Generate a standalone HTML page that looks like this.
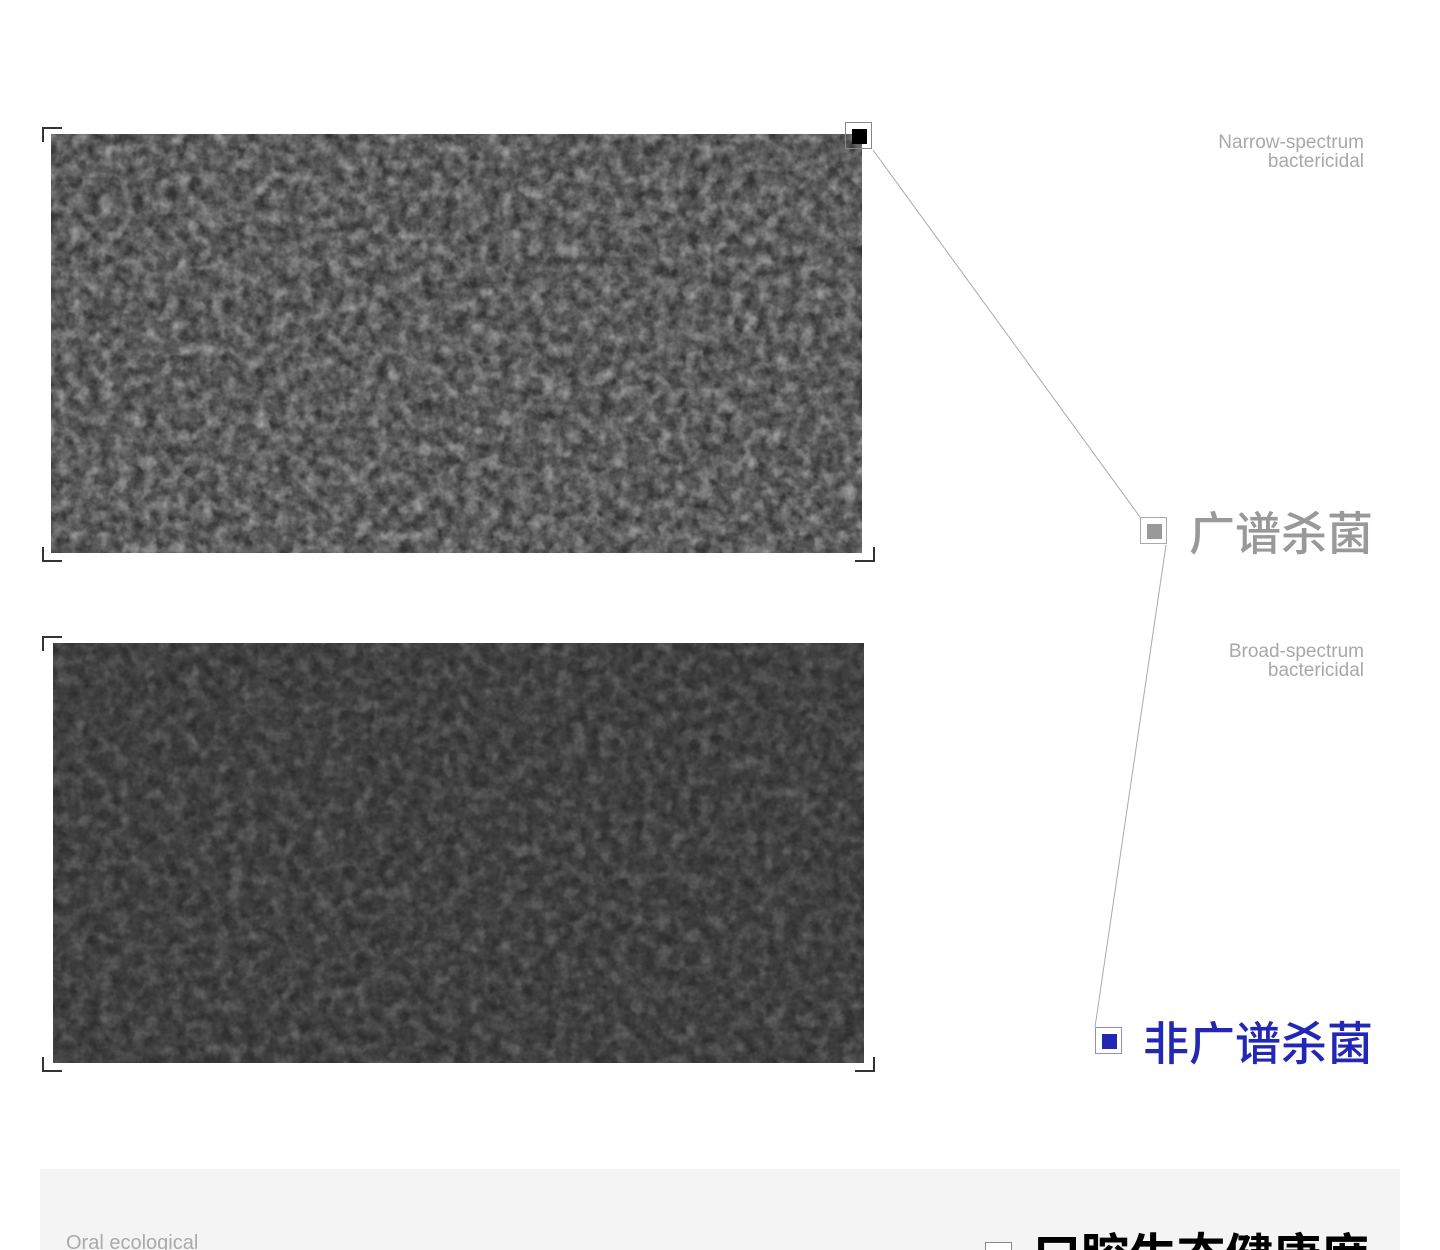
<!DOCTYPE html>
<html><head><meta charset="utf-8"><style>
html,body{margin:0;padding:0;background:#fff;width:1440px;height:1250px;overflow:hidden;position:relative;font-family:"Liberation Sans","Noto Sans CJK SC",sans-serif}
.a{position:absolute}
.c{position:absolute;width:18px;height:13px;border-color:#333;border-style:solid;border-width:0}
.sm{position:absolute;right:76px;text-align:right;color:#a8a8a8;font-size:19px;line-height:19px;font-weight:300}
.big{position:absolute;right:67px;font-size:46px;line-height:50px;font-family:"Noto Sans CJK SC",sans-serif;font-weight:500}
.box{position:absolute;width:27px;height:27px;box-sizing:border-box;border:1px solid #aaa;background:#fff}
.box i{position:absolute;left:6px;top:6px;width:15px;height:15px}
</style></head><body>
<svg class="a" style="left:0;top:0" width="1440" height="1250">
<defs>
<filter id="n1" x="0" y="0" width="100%" height="100%">
<feTurbulence type="fractalNoise" baseFrequency="0.09" numOctaves="3" seed="3"/>
<feColorMatrix type="matrix" values="0 0 0 0 0  0 0 0 0 0  0 0 0 0 0  1.6 0 0 0 -0.3"/>
</filter>
<filter id="n2" x="0" y="0" width="100%" height="100%">
<feTurbulence type="fractalNoise" baseFrequency="0.07" numOctaves="3" seed="8"/>
<feColorMatrix type="matrix" values="0 0 0 0 1  0 0 0 0 1  0 0 0 0 1  1.2 0 0 0 -0.55"/>
</filter>
</defs>
<rect x="51" y="134" width="811" height="419" fill="#747474"/>
<rect x="51" y="134" width="811" height="419" filter="url(#n1)" opacity="0.55"/>
<rect x="51" y="134" width="811" height="419" filter="url(#n2)" opacity="0.7"/>
<rect x="53" y="643" width="811" height="420" fill="#4c4c4c"/>
<rect x="53" y="643" width="811" height="420" filter="url(#n1)" opacity="0.4"/>
<rect x="53" y="643" width="811" height="420" filter="url(#n2)" opacity="0.35"/>
<line x1="873" y1="150" x2="1140" y2="517" stroke="#aaa" stroke-width="1"/>
<line x1="1166" y1="545" x2="1095" y2="1027" stroke="#aaa" stroke-width="1"/>
</svg>
<div class="c" style="left:42px;top:127px;border-left-width:2px;border-top-width:2px"></div>
<div class="c" style="left:42px;top:547px;border-left-width:2px;border-bottom-width:2px"></div>
<div class="c" style="left:855px;top:547px;border-right-width:2px;border-bottom-width:2px"></div>
<div class="c" style="left:42px;top:636px;border-left-width:2px;border-top-width:2px"></div>
<div class="c" style="left:42px;top:1057px;border-left-width:2px;border-bottom-width:2px"></div>
<div class="c" style="left:855px;top:1057px;border-right-width:2px;border-bottom-width:2px"></div>
<div class="box" style="left:845px;top:122px;border-color:#888;background:transparent"><i style="background:#000;left:6px;top:6px"></i></div>
<div class="box" style="left:1140px;top:517px"><i style="background:#999"></i></div>
<div class="box" style="left:1095px;top:1027px;border-color:#8a8fd6"><i style="background:#2228b4"></i></div>
<div class="sm" style="top:133px">Narrow-spectrum<br>bactericidal</div>
<div class="sm" style="top:642px">Broad-spectrum<br>bactericidal</div>
<div class="big" style="top:506px;color:#999">广谱杀菌</div>
<div class="big" style="top:1016px;color:#2228b4">非广谱杀菌</div>
<div class="a" style="left:40px;top:1169px;width:1360px;height:81px;background:#f4f4f4;overflow:hidden">
<div class="a" style="left:26px;top:63px;font-size:20px;color:#aaa;font-weight:300">Oral ecological</div>
<div class="a" style="left:945px;top:73px;width:27px;height:27px;box-sizing:border-box;border:1px solid #888;background:#fff"></div>
<div class="a" style="left:993px;top:56px;font-size:48px;line-height:54px;color:#000;font-family:'Noto Sans CJK SC',sans-serif;font-weight:700">口腔生态健康度</div>
</div>
</body></html>
